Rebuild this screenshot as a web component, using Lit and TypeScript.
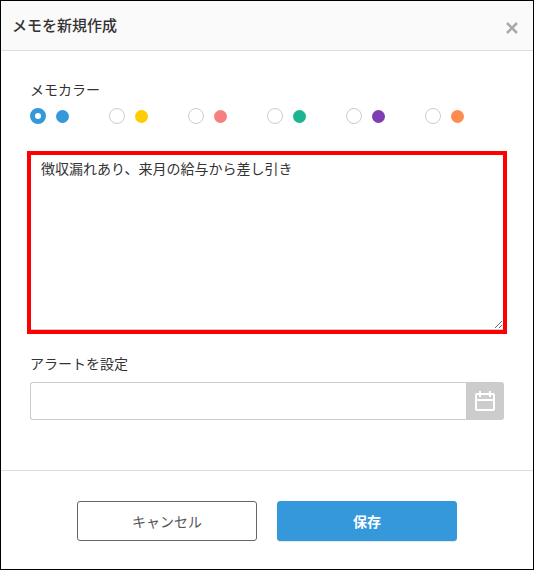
import { LitElement, html, css } from "lit";
import { customElement, state } from "lit/decorators.js";
import { styleMap } from "lit/directives/style-map.js";

interface MemoColor {
  name: string;
  value: string;
}

const COLORS: MemoColor[] = [
  { name: "青", value: "#3498db" },
  { name: "黄", value: "#ffcc00" },
  { name: "ピンク", value: "#f77f7f" },
  { name: "緑", value: "#1bb690" },
  { name: "紫", value: "#7f3db3" },
  { name: "オレンジ", value: "#ff8c4f" },
];

@customElement("app-root")
export class AppRoot extends LitElement {
  static styles = css`
    :host {
      display: block;
      font-family: "Noto Sans CJK JP", sans-serif;
      font-size: 14px;
      line-height: 18px;
      color: #333;
    }
    * {
      box-sizing: border-box;
    }
    input,
    textarea,
    button {
      font: inherit;
      color: inherit;
      margin: 0;
    }
    .dialog {
      border: 1px solid #000;
      background: #fff;
    }
    .header {
      display: flex;
      align-items: center;
      justify-content: space-between;
      height: 50px;
      padding: 0 12px 0 11px;
      background: #fafafa;
      border-bottom: 1px solid #ddd;
    }
    .title {
      margin: 0;
      padding-bottom: 2px;
      font-size: 15px;
      font-weight: 500;
    }
    .close {
      display: flex;
      padding: 4px 0 0 4px;
      border: 0;
      background: none;
      color: #aaa;
    }
    .body {
      padding: 29px 29px 50px;
    }
    .colors {
      margin: 0;
      padding: 0;
      border: 0;
      min-width: 0;
    }
    .colors legend {
      padding: 0;
      margin-bottom: 10px;
    }
    .options {
      display: grid;
      grid-template-columns: repeat(6, 1fr);
      height: 16px;
    }
    .option {
      display: flex;
      align-items: flex-start;
      gap: 10px;
    }
    .radio {
      appearance: none;
      width: 16px;
      height: 16px;
      border: 1px solid #ccc;
      border-radius: 50%;
      background: #fff;
    }
    .radio:checked {
      border: 5px solid #3498db;
    }
    .dot {
      width: 13px;
      height: 13px;
      margin-top: 2px;
      border-radius: 50%;
    }
    .memo {
      display: flex;
      margin: 27px -3px 20px;
      border: 4px solid #f00;
    }
    .text {
      display: block;
      width: 100%;
      height: 175px;
      padding: 4px 10px;
      border: 0;
      border-bottom: 1px solid #ccc;
      outline: 0;
      background: #fff;
      resize: vertical;
    }
    .label {
      display: block;
      margin-bottom: 10px;
    }
    .date {
      display: flex;
      height: 38px;
    }
    .field {
      flex: 1;
      min-width: 0;
      padding: 0 10px;
      border: 1px solid #ccc;
      border-right: 0;
      border-radius: 3px 0 0 3px;
      outline: 0;
      background: #fff;
    }
    .pick {
      display: flex;
      align-items: center;
      justify-content: center;
      width: 38px;
      padding: 0;
      border: 0;
      border-radius: 0 3px 3px 0;
      background: #ccc;
      color: #fff;
    }
    .footer {
      display: flex;
      justify-content: center;
      gap: 20px;
      padding: 30px 20px 28px;
      border-top: 1px solid #ddd;
    }
    .button {
      flex: 0 1 180px;
      height: 40px;
      padding: 0;
      border: 1px solid #666;
      border-radius: 3px;
      background: #fff;
      color: #555;
    }
    .primary {
      border-color: #3498db;
      background: #3498db;
      color: #fff;
      font-weight: 700;
      box-shadow: 0 1px 1px #0000001a;
    }
  `;

  @state() private selected = 0;

  render() {
    return html`
      <form class="dialog" @submit=${(e: Event) => e.preventDefault()}>
        <header class="header">
          <h1 class="title">メモを新規作成</h1>
          <button class="close" type="button" aria-label="閉じる">
            <svg width="18" height="18" viewBox="0 0 18 18" fill="none" stroke="currentColor" stroke-width="2.6">
              <path d="M4 4 14 14M14 4 4 14" />
            </svg>
          </button>
        </header>
        <div class="body">
          <fieldset class="colors">
            <legend>メモカラー</legend>
            <div class="options">
              ${COLORS.map(
                (c, i) => html`<label class="option">
                  <input
                    class="radio"
                    type="radio"
                    name="color"
                    aria-label=${c.name}
                    .checked=${i === this.selected}
                    @change=${() => (this.selected = i)}
                  />
                  <span class="dot" style=${styleMap({ background: c.value })}></span>
                </label>`
              )}
            </div>
          </fieldset>
          <div class="memo">
            <textarea class="text" aria-label="メモ" .value=${"徴収漏れあり、来月の給与から差し引き"}></textarea>
          </div>
          <label class="label" for="alert">アラートを設定</label>
          <div class="date">
            <input class="field" id="alert" type="text" />
            <button class="pick" type="button" aria-label="日付を選択">
              <svg width="22" height="22" viewBox="0 0 22 22" fill="none" stroke="currentColor" stroke-width="2">
                <rect x="2" y="4" width="18" height="16" rx="1" />
                <path d="M2 10H20M6 1V7M16 1V7" />
              </svg>
            </button>
          </div>
        </div>
        <footer class="footer">
          <button class="button" type="button">キャンセル</button>
          <button class="button primary" type="submit">保存</button>
        </footer>
      </form>
    `;
  }
}
